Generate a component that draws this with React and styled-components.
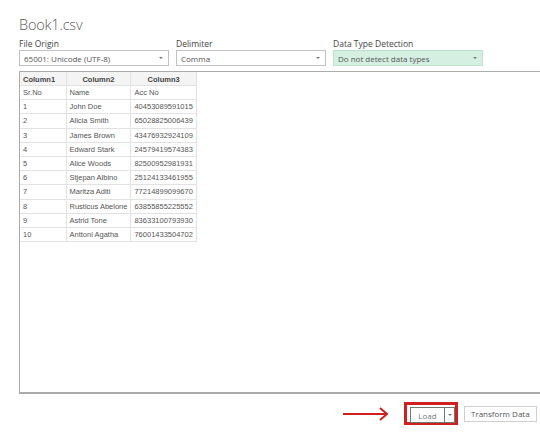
import styled, { createGlobalStyle } from "styled-components";

const GlobalStyle = createGlobalStyle`
  html, body {
    margin: 0;
    padding: 0;
    background: #ffffff;
    overflow: hidden;
  }
`;

const Page = styled.div`
  width: 540px;
  height: 433px;
  overflow: hidden;
  padding: 15px 0 0 19px;
  box-sizing: border-box;
  font-family: "Open Sans", "Noto Sans", sans-serif;
  color: #444;
`;

const Title = styled.h1`
  margin: 0;
  height: 23px;
  font-size: 14.5px;
  font-weight: 300;
  line-height: 20px;
  letter-spacing: -0.2px;
  color: #5a5a5a;
`;

const Options = styled.div`
  display: flex;
  gap: 7px;
`;

const Field = styled.div`
  display: flex;
  flex-direction: column;
  width: 150px;
`;

const Label = styled.div`
  font-size: 8.5px;
  line-height: 12px;
  color: #444;
`;

const Select = styled.div`
  height: 16px;
  box-sizing: border-box;
  border: 1px solid ${(p) => (p.$active ? "#bfe0cf" : "#c2c2c2")};
  background: ${(p) => (p.$active ? "#d5f0e2" : "#ffffff")};
  display: flex;
  align-items: center;
  justify-content: space-between;
  padding: 0 5px 0 4px;
  font-size: 8px;
  color: #555;
`;

const Caret = styled.span`
  width: 0;
  height: 0;
  border-left: 2px solid transparent;
  border-right: 2px solid transparent;
  border-top: 2px solid #777;
`;

const Preview = styled.div`
  margin-top: 5px;
  margin-right: -10px;
  height: 323px;
  box-sizing: border-box;
  border-top: 1px solid #ababab;
  border-left: 1px solid #ababab;
  border-bottom: 2px solid #ababab;
`;

const Table = styled.table`
  border-collapse: collapse;
  font-family: "Liberation Sans", Arial, sans-serif;
  font-size: 7.5px;
  color: #555;
`;

const Head = styled.th`
  height: 13.5px;
  padding: 1px 3px 0;
  background: #f4f4f4;
  border-right: 1px solid #e2e2e2;
  border-bottom: 1px solid #e2e2e2;
  font-weight: bold;
  color: #444;
  text-align: ${(p) => (p.$center ? "center" : "left")};
  width: ${(p) => p.$w}px;
  box-sizing: border-box;
`;

const Cell = styled.td`
  height: 13.2px;
  padding: 0 3px;
  border-right: 1px solid #e2e2e2;
  border-bottom: 1px solid #e2e2e2;
  white-space: nowrap;
`;

const Footer = styled.div`
  display: flex;
  align-items: center;
  margin-top: 8px;
  padding-left: 324px;
`;

const Arrow = styled.svg`
  width: 46px;
  height: 14px;
  margin-right: 15px;
  flex-shrink: 0;
`;

const Highlight = styled.div`
  display: flex;
  border: 3px solid #cf1f1f;
  padding: 2px 3px;
  width: 54px;
  height: 23px;
  box-sizing: border-box;
  flex-shrink: 0;
`;

const SplitButton = styled.div`
  display: flex;
  height: 16px;
  box-sizing: border-box;
  border: 1px solid #6c7a72;
  font-size: 8px;
  color: #777;
`;

const SplitMain = styled.div`
  width: 33px;
  display: flex;
  align-items: center;
  justify-content: center;
  border-right: 1px solid #6c7a72;
`;

const SplitDrop = styled.div`
  width: 9px;
  display: flex;
  align-items: center;
  justify-content: center;
`;

const Button = styled.div`
  height: 16px;
  min-width: 20px;
  margin-left: ${(p) => p.$gap}px;
  box-sizing: border-box;
  border: 1px solid #cfcfcf;
  padding: 0 6px;
  display: flex;
  align-items: center;
  font-size: 8px;
  color: #555;
  white-space: nowrap;
  flex-shrink: 0;
`;

const rows = [
  ["1", "John Doe", "40453089591015"],
  ["2", "Alicia Smith", "65028825006439"],
  ["3", "James Brown", "43476932924109"],
  ["4", "Edward Stark", "24579419574383"],
  ["5", "Alice Woods", "82500952981931"],
  ["6", "Stjepan Albino", "25124133461955"],
  ["7", "Maritza Aditi", "77214899099670"],
  ["8", "Rusticus Abelone", "63855855225552"],
  ["9", "Astrid Tone", "83633100793930"],
  ["10", "Anttoni Agatha", "76001433504702"],
];

export default function App() {
  return (
    <Page>
      <GlobalStyle />
      <Title>Book1.csv</Title>
      <Options>
        <Field>
          <Label>File Origin</Label>
          <Select>
            65001: Unicode (UTF-8)
            <Caret />
          </Select>
        </Field>
        <Field>
          <Label>Delimiter</Label>
          <Select>
            Comma
            <Caret />
          </Select>
        </Field>
        <Field>
          <Label>Data Type Detection</Label>
          <Select $active>
            Do not detect data types
            <Caret />
          </Select>
        </Field>
      </Options>
      <Preview>
        <Table>
          <thead>
            <tr>
              <Head $w={46}>Column1</Head>
              <Head $w={64} $center>Column2</Head>
              <Head $w={64} $center>Column3</Head>
            </tr>
          </thead>
          <tbody>
            <tr>
              <Cell>Sr.No</Cell>
              <Cell>Name</Cell>
              <Cell>Acc No</Cell>
            </tr>
            {rows.map((r) => (
              <tr key={r[0]}>
                <Cell>{r[0]}</Cell>
                <Cell>{r[1]}</Cell>
                <Cell>{r[2]}</Cell>
              </tr>
            ))}
          </tbody>
        </Table>
      </Preview>
      <Footer>
        <Arrow viewBox="0 0 46 14">
          <path d="M0 7H44" stroke="#cf1f1f" strokeWidth="2" />
          <path d="M37 1L44 7L37 13" stroke="#cf1f1f" strokeWidth="2" fill="none" />
        </Arrow>
        <Highlight>
          <SplitButton>
            <SplitMain>Load</SplitMain>
            <SplitDrop>
              <Caret />
            </SplitDrop>
          </SplitButton>
        </Highlight>
        <Button $gap={6}>Transform Data</Button>
        <Button $gap={9} />
      </Footer>
    </Page>
  );
}
